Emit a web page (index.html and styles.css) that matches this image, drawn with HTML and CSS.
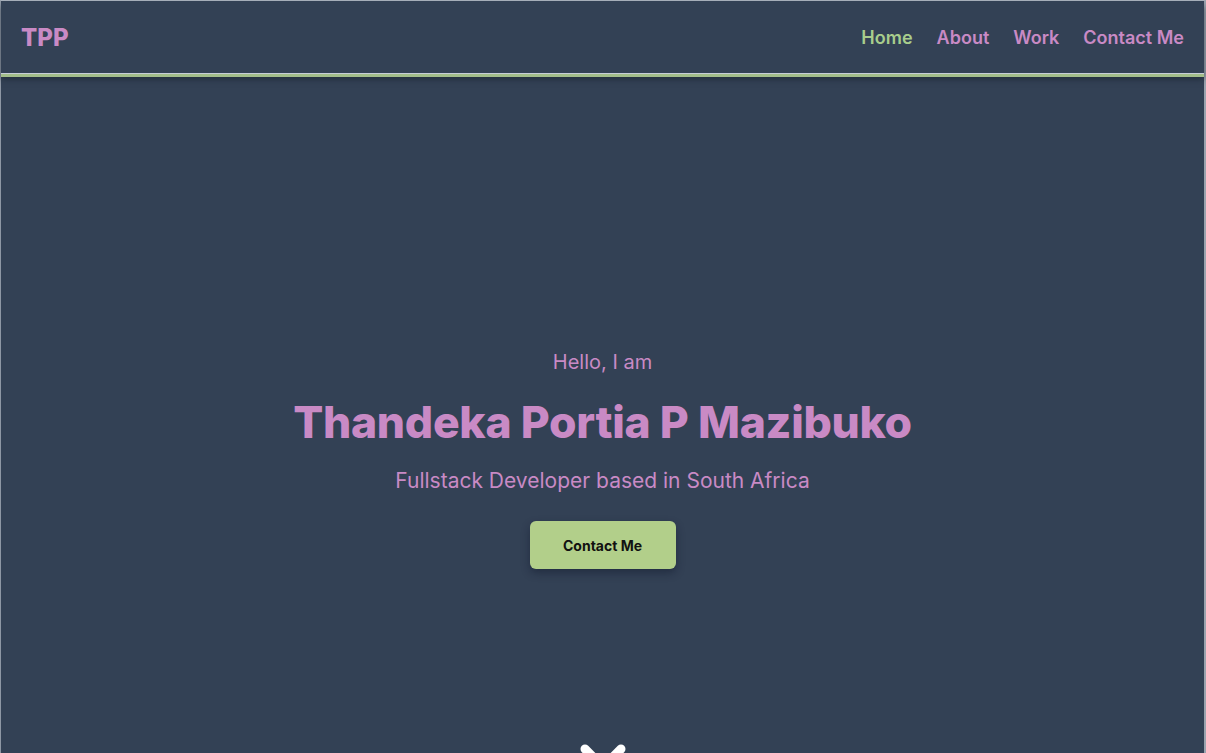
FILE: index.html
```html
<!DOCTYPE html>
<html lang="en">
<head>
<meta charset="utf-8">
<title>TPP</title>
<link rel="stylesheet" href="styles.css">
</head>
<body>
<div class="frame">
  <header class="navbar">
    <a class="logo" href="#">TPP</a>
    <nav class="links">
      <a class="link active" href="#">Home</a>
      <a class="link" href="#">About</a>
      <a class="link" href="#">Work</a>
      <a class="link" href="#">Contact Me</a>
    </nav>
  </header>
  <main class="hero">
    <p class="hello">Hello, I am</p>
    <h1 class="name">Thandeka Portia P Mazibuko</h1>
    <p class="role">Fullstack Developer based in South Africa</p>
    <a class="btn" href="#">Contact Me</a>
    <div class="scroll">
      <svg width="48" height="30" viewBox="0 0 48 30" fill="none" stroke="#ffffff" stroke-width="9" stroke-linecap="round" stroke-linejoin="round">
        <path d="M6 5 L24 23 L42 5"/>
      </svg>
    </div>
  </main>
</div>
</body>
</html>
```

FILE: styles.css
```css
html, body {
  margin: 0;
  padding: 0;
  height: 100%;
  overflow: hidden;
}
body {
  background: #334155;
  font-family: Inter, "Noto Sans", Arial, sans-serif;
}
.frame {
  box-sizing: border-box;
  height: 753px;
  border-top: 1px solid #aab2bd;
  border-left: 1px solid #8e97a4;
  border-right: 2px solid #9aa3ae;
  background: #334155;
}
.navbar {
  display: flex;
  align-items: center;
  justify-content: space-between;
  height: 72px;
  padding: 0 20px 0 20px;
  border-bottom: 1px solid #c7ced8;
  box-shadow: 0 3px 0 #a3be8a, 0 5px 6px rgba(20, 30, 40, 0.6);
  position: relative;
  z-index: 1;
}
.logo {
  color: #c98ac5;
  font-weight: 800;
  font-size: 24px;
  text-decoration: none;
}
.links {
  display: flex;
  gap: 24px;
}
.link {
  color: #c98ac5;
  font-weight: 600;
  font-size: 18px;
  text-decoration: none;
}
.link.active {
  color: #a8cd8c;
}
.hero {
  display: flex;
  flex-direction: column;
  align-items: center;
  padding-top: 274px;
}
.hello {
  margin: 0;
  color: #c98ac5;
  font-size: 20px;
  line-height: 28px;
}
.name {
  margin: 18px 0 0 0;
  color: #c98ac5;
  font-size: 44.5px;
  line-height: 56px;
  font-weight: 800;
  letter-spacing: -0.3px;
}
.role {
  margin: 17px 0 0 0;
  color: #c98ac5;
  font-size: 21px;
  line-height: 28px;
}
.btn {
  margin-top: 26px;
  width: 146px;
  height: 48px;
  box-sizing: border-box;
  display: flex;
  align-items: center;
  justify-content: center;
  background: #b2cf8a;
  color: #111;
  font-weight: 700;
  font-size: 14px;
  border-radius: 6px;
  text-decoration: none;
  box-shadow: 0 4px 8px rgba(15, 23, 42, 0.45);
}
.scroll {
  margin-top: 175px;
  display: flex;
  justify-content: center;
}
.scroll svg {
  display: block;
}
```
